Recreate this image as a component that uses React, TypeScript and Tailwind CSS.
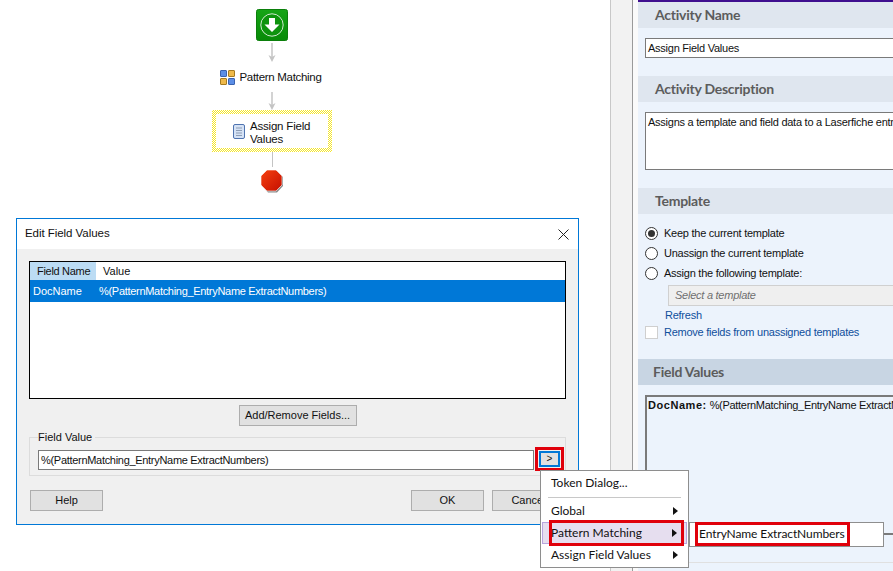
import React from "react";

const Btn = ({ label, className }: { label: string; className: string }) => (
  <div className={`h-[21px] flex items-center justify-center whitespace-nowrap bg-[#e1e1e1] border border-[#adadad] text-[11px] text-[#111] ${className}`}>{label}</div>
);

const Arrow = ({ h }: { h: number }) => (
  <svg width="10" height={h} viewBox={`0 0 10 ${h}`} className="block">
    <line x1="5" y1="0" x2="5" y2={h - 4} stroke="#c4c4c4" strokeWidth="1.5" />
    <path d={`M1.5 ${h - 7} L5 ${h} L8.5 ${h - 7} L5 ${h - 5} Z`} fill="#c4c4c4" />
  </svg>
);

const Start = () => (
  <svg width="32" height="32" viewBox="0 0 32 32" className="block">
    <defs>
      <linearGradient id="gs" x1="0" y1="0" x2="0" y2="1">
        <stop offset="0" stopColor="#16a516" />
        <stop offset="1" stopColor="#078a07" />
      </linearGradient>
    </defs>
    <rect x="0.5" y="0.5" width="31" height="31" rx="2" fill="url(#gs)" stroke="#0b7f0b" />
    <circle cx="16" cy="16" r="11.2" fill="#0d930d" stroke="#cfe9cf" strokeWidth="1" />
    <path d="M13 9 H19 V15.5 H23.5 L16 23 L8.5 15.5 H13 Z" fill="#fff" />
  </svg>
);

const Pattern = () => (
  <svg width="15" height="15" viewBox="0 0 15 15" className="block">
    <rect x="0.5" y="0.5" width="6" height="6" rx="0.5" fill="#5b8ee6" stroke="#3a63b0" />
    <rect x="8.5" y="0.5" width="6" height="6" rx="0.5" fill="#eeb94a" stroke="#a67b20" />
    <rect x="0.5" y="8.5" width="6" height="6" rx="0.5" fill="#eeb94a" stroke="#a67b20" />
    <rect x="8.5" y="8.5" width="6" height="6" rx="0.5" fill="#5b8ee6" stroke="#3a63b0" />
  </svg>
);

const Doc = () => (
  <svg width="12" height="15" viewBox="0 0 12 15" className="block">
    <rect x="0.5" y="0.5" width="11" height="14" rx="1.5" fill="#d5e2f5" stroke="#4f74b0" />
    <path d="M3 4 H9 M3 6.5 H9 M3 9 H9 M3 11.5 H9" stroke="#8d9db5" strokeWidth="1" />
  </svg>
);

const Stop = () => (
  <svg width="24" height="24" viewBox="0 0 24 24" className="block">
    <defs>
      <linearGradient id="gr" x1="0" y1="0" x2="1" y2="1">
        <stop offset="0" stopColor="#f6400f" />
        <stop offset="1" stopColor="#c40f00" />
      </linearGradient>
    </defs>
    <path d="M8 2 H17 L23 8 V17 L17 23.5 H8 L2 17 V8 Z" fill="#8a8a8a" />
    <path d="M7 1 H16 L22 7 V16 L16 22 H7 L1 16 V7 Z" fill="url(#gr)" stroke="#fff" strokeWidth="0.6" />
  </svg>
);

const Diagram = () => (
  <div className="w-[544px] flex flex-col items-center pt-[9px] text-[11.5px] text-[#111]">
    <Start />
    <div className="mt-[2px]"><Arrow h={19} /></div>
    <div className="mt-[7px] h-[16px] flex items-center gap-[4px] pr-[2px]">
      <Pattern />
      <span className="whitespace-nowrap tracking-[-0.3px] pt-[1px]">Pattern Matching</span>
    </div>
    <div className="mt-[7px]"><Arrow h={18} /></div>
    <div className="w-[120px] h-[42px] p-[4px] bg-[repeating-conic-gradient(#f5e62a_0_25%,#ffffff_0_50%)] bg-[length:2px_2px]">
      <div className="h-full bg-white flex items-center gap-[5px] pl-[17px]">
        <Doc />
        <span className="w-[68px] leading-[13px] tracking-[-0.2px] pt-[3px]">Assign Field Values</span>
      </div>
    </div>
    <div className="w-[1px] h-[15px] bg-[#c4c4c4]" />
    <div className="mt-[2px]"><Stop /></div>
  </div>
);

const Dialog = () => (
  <div className="absolute left-[16px] top-[218px] w-[563px] h-[307px] border border-[#0078d7] bg-[#f0f0f0] text-[11px] text-[#111] flex flex-col">
    <div className="h-[30px] bg-white flex items-center justify-between pl-[8px] pr-[9px] shrink-0">
      <span className="text-[11.5px] tracking-[-0.05px]">Edit Field Values</span>
      <svg width="11" height="11" viewBox="0 0 11 11"><path d="M0.5 0.5 L10.5 10.5 M10.5 0.5 L0.5 10.5" stroke="#222" strokeWidth="1" /></svg>
    </div>
    <div className="flex-1 flex flex-col px-[12px] pt-[12px]">
      <div className="h-[138px] border border-black bg-white flex flex-col shrink-0">
        <div className="h-[18px] flex items-center shrink-0">
          <div className="w-[66px] h-full bg-[#bcdcf4] flex items-center pl-[7px] whitespace-nowrap tracking-[-0.3px]">Field Name</div>
          <div className="pl-[7px]">Value</div>
        </div>
        <div className="h-[22px] bg-[#0078d7] text-white flex items-center pl-[3px] shrink-0">
          <span className="w-[66px]">DocName</span>
          <span className="tracking-[-0.3px]">%(PatternMatching_EntryName ExtractNumbers)</span>
        </div>
      </div>
      <div className="flex justify-center mt-[6px]">
        <Btn label="Add/Remove Fields..." className="w-[118px]" />
      </div>
      <div className="relative mt-[11px] h-[39px] border border-[#dcdcdc] pl-[8px] pt-[12px] pr-[31px]">
        <span className="absolute left-[8px] -top-[8px] bg-[#f0f0f0] pr-[3px] leading-[14px]">Field Value</span>
        <div className="h-[20px] border border-[#7a7a7a] bg-white flex items-center pl-[2px] tracking-[-0.3px]">%(PatternMatching_EntryName ExtractNumbers)</div>
        <div className="absolute left-[505px] top-[9px] w-[29px] h-[24px] border-[3px] border-[#e0000b] p-[1px] flex">
          <div className="flex-1 border-2 border-[#0078d7] bg-[#e1e1e1] flex items-center justify-center text-[10px] leading-none">&gt;</div>
        </div>
      </div>
      <div className="flex mt-[14px] pl-[1px]">
        <Btn label="Help" className="w-[73px]" />
        <Btn label="OK" className="w-[73px] ml-[308px]" />
        <Btn label="Cancel" className="w-[73px] ml-[8px]" />
      </div>
    </div>
  </div>
);

const Arr = () => (
  <svg width="5" height="8" viewBox="0 0 5 8"><path d="M0 0 L5 4 L0 8 Z" fill="#111" /></svg>
);

const MenuRow = ({ label }: { label: string }) => (
  <div className="h-[22px] flex items-center justify-between pl-[10px] pr-[10px]">
    <span>{label}</span>
    <Arr />
  </div>
);

const Menu = () => (
  <div className="font-['Lato',sans-serif]">
    <div className="absolute left-[540px] top-[470px] w-[149px] h-[98px] border border-[#8e8e8e] bg-white text-[12px] text-[#111] pt-[1px]">
      <div className="h-[21px] flex items-center pl-[10px] pt-[1px]">Token Dialog...</div>
      <div className="h-[1px] bg-[#c8c8c8] mx-[7px] mt-[4px] mb-[2px]" />
      <MenuRow label="Global" />
      <div className="h-[22px]" />
      <MenuRow label="Assign Field Values" />
    </div>
    <div className="absolute left-[542px] top-[522px] w-[145px] h-[22px] bg-[#e6deef] border border-[#b9a5de] text-[12px] text-[#111] flex items-center justify-between pl-[8px] pr-[9px]">
      <span>Pattern Matching</span>
      <Arr />
    </div>
    <div className="absolute left-[549px] top-[520px] w-[135px] h-[26px] border-[3px] border-[#e0000b]" />
    <div className="absolute left-[689px] top-[522px] w-[195px] h-[25px] border border-[#8e8e8e] bg-white" />
    <div className="absolute left-[695px] top-[522px] w-[155px] h-[24px] border-[3px] border-[#e0000b] bg-white flex items-center pl-[1px] text-[12px] text-[#111] tracking-[-0.1px] whitespace-nowrap">EntryName ExtractNumbers</div>
  </div>
);

const Head = ({ label, dark, narrow }: { label: string; dark?: boolean; narrow?: boolean }) => (
  <div className={`h-[26px] flex items-center pb-[2px] font-['Lato',sans-serif] text-[14px] font-bold text-[#5c5c5c] ${narrow ? "pl-[15px]" : "pl-[17px]"} ${dark ? "bg-[#c8d5e3]" : "bg-[#dfe6ef]"}`}>{label}</div>
);

const Radio = ({ label, on }: { label: string; on?: boolean }) => (
  <div className="h-[20px] flex items-center gap-[6px]">
    <div className="w-[13px] h-[13px] rounded-full border border-[#333] bg-white flex items-center justify-center">
      {on && <div className="w-[7px] h-[7px] rounded-full bg-[#333]" />}
    </div>
    <span>{label}</span>
  </div>
);

const Panel = () => (
  <div className="w-[255px] shrink-0 h-full bg-[#ecf3fc] border-t-2 border-[#3f0f8f] overflow-hidden text-[11px] tracking-[-0.25px] text-[#111] whitespace-nowrap">
    <Head label="Activity Name" />
    <div className="mt-[10px] ml-[7px] h-[20px] w-[300px] border border-[#7a7a7a] bg-white flex items-center pl-[2px]">Assign Field Values</div>
    <div className="mt-[18px]"><Head label="Activity Description" /></div>
    <div className="mt-[10px] ml-[7px] h-[58px] w-[300px] border border-[#7a7a7a] bg-white pl-[2px] leading-[18px]">Assigns a template and field data to a Laserfiche entry.</div>
    <div className="mt-[18px]"><Head label="Template" /></div>
    <div className="mt-[9px] ml-[7px]">
      <Radio on label="Keep the current template" />
      <Radio label="Unassign the current template" />
      <Radio label="Assign the following template:" />
      <div className="ml-[23px] mt-[2px] h-[21px] w-[300px] bg-[#efefef] border border-[#d0d0d0] flex items-center pl-[6px] italic text-[#707070]">Select a template</div>
      <div className="ml-[20px] h-[18px] flex items-center text-[#0f4f9c]">Refresh</div>
      <div className="mt-[1px] h-[15px] flex items-center gap-[6px] text-[#0f4f9c]">
        <div className="w-[13px] h-[13px] border border-[#cfcfcf] bg-white" />
        <span>Remove fields from unassigned templates</span>
      </div>
    </div>
    <div className="mt-[19px]"><Head label="Field Values" dark narrow /></div>
    <div className="mt-[10px] ml-[7px] h-[140px] w-[300px] border-2 border-[#7a7a7a] border-r-0 bg-[#ecf3fc] pl-[1px] leading-[16px]">
      <span className="font-bold tracking-[0.55px]">DocName:</span> <span className="tracking-[-0.3px]">%(PatternMatching_EntryName ExtractNumbers)</span>
    </div>
    <div className="mt-[27px] h-[1px] bg-[#e0e0e0]" />
  </div>
);

export default function App() {
  return (
    <div className="relative w-[893px] h-[571px] bg-white overflow-hidden flex font-['Liberation_Sans',Arial,sans-serif]">
      <div className="w-[610px] shrink-0"><Diagram /></div>
      <div className="w-[23px] shrink-0 bg-[#f2f2f2] border-l border-r border-l-[#c8c8c8] border-r-[#9a9a9a]" />
      <div className="w-[5px] shrink-0 bg-[#fafafa]" />
      <Panel />
      <Dialog />
      <Menu />
    </div>
  );
}
